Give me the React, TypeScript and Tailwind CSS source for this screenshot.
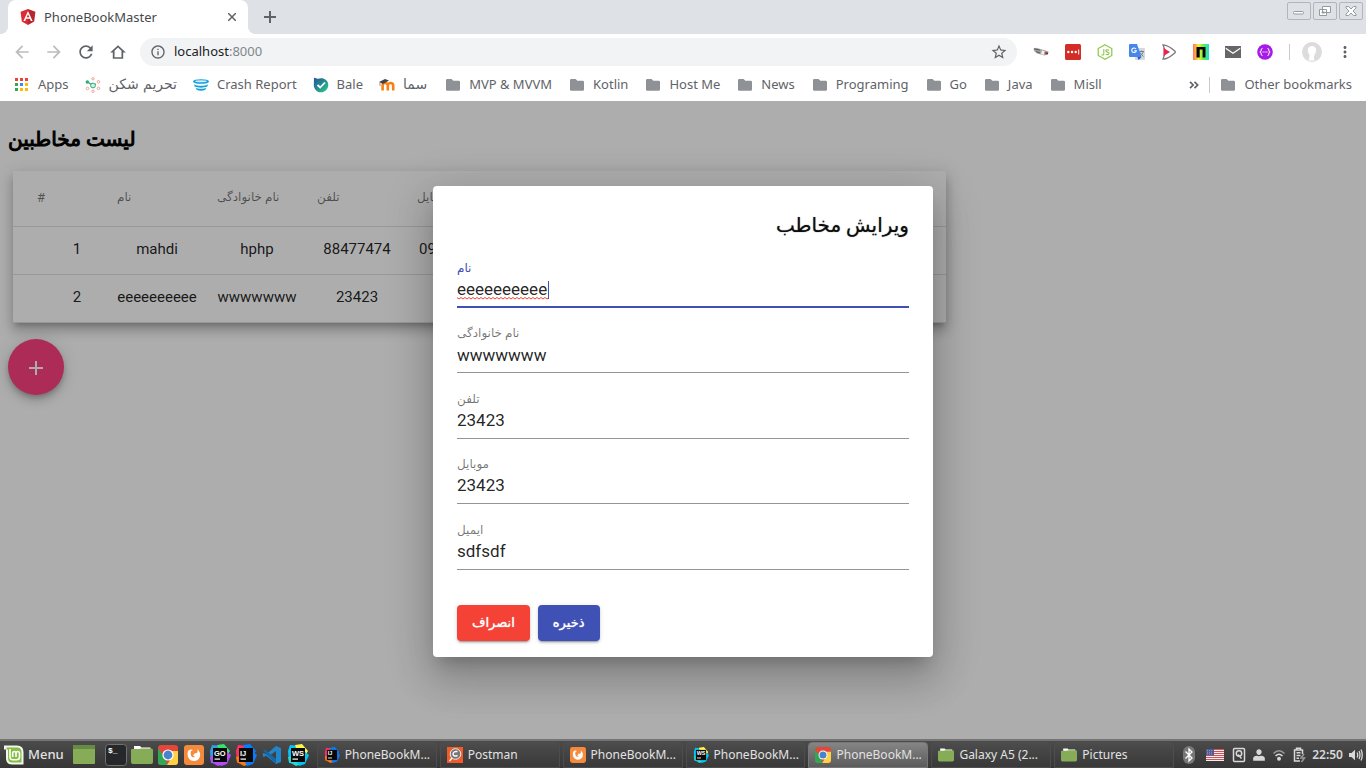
import React from 'react';

type IconProps = { className?: string };

/* ---------- Browser icons ---------- */

const material = {
  back: 'M20 11H7.83l5.59-5.59L12 4l-8 8 8 8 1.41-1.41L7.83 13H20v-2z',
  forward: 'M12 4l-1.41 1.41L16.17 11H4v2h12.17l-5.58 5.59L12 20l8-8z',
  reload:
    'M17.65 6.35C16.2 4.9 14.21 4 12 4c-4.42 0-7.99 3.58-7.99 8s3.57 8 7.99 8c3.73 0 6.84-2.55 7.73-6h-2.08c-.82 2.33-3.04 4-5.65 4-3.31 0-6-2.69-6-6s2.69-6 6-6c1.66 0 3.14.69 4.22 1.78L13 11h7V4l-2.35 2.35z',
  home: 'M12 1.800 L.2 12.800 H4.200 V22.200 H19.800 V12.800 H23.800 Z M12 5.200 L17.200 10.300 V19.800 H6.800 V10.300 Z',
  info: 'M11 7h2v2h-2zm0 4h2v6h-2zm1-9C6.48 2 2 6.48 2 12s4.48 10 10 10 10-4.48 10-10S17.52 2 12 2zm0 18c-4.41 0-8-3.59-8-8s3.59-8 8-8 8 3.59 8 8-3.59 8-8 8z',
  star: 'M22 9.24l-7.19-.62L12 2 9.19 8.63 2 9.24l5.46 4.73L5.82 21 12 17.27 18.18 21l-1.63-7.03L22 9.24zM12 15.4l-3.76 2.27 1-4.28-3.32-2.88 4.38-.38L12 6.1l1.71 4.04 4.38.38-3.32 2.88 1 4.28L12 15.4z',
  more: 'M12 8c1.1 0 2-.9 2-2s-.9-2-2-2-2 .9-2 2 .9 2 2 2zm0 2c-1.1 0-2 .9-2 2s.9 2 2 2 2-.9 2-2-.9-2-2-2zm0 6c-1.1 0-2 .9-2 2s.9 2 2 2 2-.9 2-2-.9-2-2-2z',
  person: 'M12 12c2.6 0 4.6-2.3 4.6-5S14.600 2 12 2 7.400 4.300 7.400 7s2 5 4.600 5zm-10 10h20v-4.500c0-2.500-3-3.800-6-4.300l-4 1-4-1c-3 .5-6 1.800-6 4.300z',
};

function Glyph({ d, className }: { d: string; className: string }) {
  return (
    <svg viewBox="0 0 24 24" fill="currentColor" fillRule="evenodd" className={className}>
      <path d={d} />
    </svg>
  );
}

function AngularLogo() {
  return (
    <svg viewBox="0 0 16 16" className="size-4">
      <path d="M8 0 L.6 2.700 1.800 12.500 8 16Z" fill="#dd2a33" />
      <path d="M8 0 L15.400 2.700 14.200 12.500 8 16Z" fill="#b8262f" />
      <path d="M8 2 L3.400 12.100 H5.200 L6.100 9.800 H9.900 L10.800 12.100 H12.600Z M8 5.300 L9.300 8.300 H6.700Z" fill="#fff" fillRule="evenodd" />
    </svg>
  );
}

function AppsGrid() {
  const colors = ['#ea4335', '#ea4335', '#ea4335', '#34a853', '#4285f4', '#fbbc05', '#34a853', '#fbbc05', '#fbbc05'];
  return (
    <svg viewBox="0 0 16 16" className="size-4">
      {colors.map((c, i) => (
        <rect key={i} x={1 + (i % 3) * 5} y={1 + Math.floor(i / 3) * 5} width="3" height="3" fill={c} />
      ))}
    </svg>
  );
}

function NetworkIcon() {
  return (
    <svg viewBox="0 0 16 16" className="size-4" fill="none">
      <path d="M2.500 5 L8 8.500 L11 7" stroke="#2bab7b" strokeWidth="1.300" />
      <circle cx="8" cy="8.500" r="2.400" stroke="#2bab7b" fill="#d8f1e7" />
      <circle cx="2.300" cy="5" r="1.700" fill="#2bab7b" />
      <g stroke="#f2a48e">
        <circle cx="8" cy="1.800" r="1.200" />
        <circle cx="13.500" cy="4.800" r="1.300" />
        <circle cx="13.500" cy="11.300" r="1.300" />
        <circle cx="8" cy="14.300" r="1.200" />
        <circle cx="2.500" cy="11.500" r="1.300" />
      </g>
    </svg>
  );
}

function CrashIcon() {
  return (
    <svg viewBox="0 0 16 16" className="size-4">
      <ellipse cx="8" cy="4.500" rx="8" ry="2.300" fill="#159fdc" />
      <ellipse cx="8" cy="4.300" rx="5.800" ry="1" fill="#d2effb" />
      <path d="M1 7.300 C4 9.300 12 9.300 15 7.300 L14.300 9.500 C11 11 5 11 1.700 9.500Z M2.500 10.700 C5 12 11 12 13.500 10.700 L12.300 12.700 C10 14 6 14 3.700 12.700Z" fill="#159fdc" />
    </svg>
  );
}

function BaleIcon() {
  return (
    <svg viewBox="0 0 16 16" className="size-4">
      <defs>
        <linearGradient id="bale" x1="0" y1="0" x2="1" y2="1">
          <stop offset="0" stopColor="#2d4fa0" />
          <stop offset=".5" stopColor="#238f8d" />
          <stop offset="1" stopColor="#30cf91" />
        </linearGradient>
      </defs>
      <path d="M1 .8 C3 1 4 2 5 1.800 C9 0 15.300 2 15.300 8 C15.300 12 12 15.300 8 15.300 C3.500 15.300 1 11.800 .8 8Z" fill="url(#bale)" />
      <path d="M4.500 8 L7.200 10.500 L12 5.500" fill="none" stroke="#fff" strokeWidth="1.800" />
    </svg>
  );
}

function MoodleIcon() {
  return (
    <svg viewBox="0 0 16 16" className="size-4">
      <path d="M3.600 13.500 V8.500 C3.600 5.200 8.800 5.200 8.800 8.500 V13.500 M8.800 8.500 C8.800 5.200 14.200 5.200 14.200 8.500 V13.500" fill="none" stroke="#f98012" strokeWidth="2.600" />
      <path d="M0 5 L6 2 L10 3.500 L4 7Z" fill="#444" />
      <path d="M1 5.500 V9" stroke="#777" strokeWidth=".8" />
    </svg>
  );
}

function BookmarkFolder() {
  return (
    <svg viewBox="0 0 16 16" className="size-4">
      <path d="M2.300 2 H6.600 L8.300 3.700 H13.700 Q15 3.700 15 5 V12.500 Q15 13.800 13.700 13.800 H2.300 Q1 13.800 1 12.500 V3.300 Q1 2 2.300 2Z" fill="#8e9196" />
    </svg>
  );
}

/* ---------- Extension icons ---------- */

const extensions: { name: string; art: React.ReactNode }[] = [
  {
    name: 'Camera',
    art: (
      <>
        <path d="M.5 4.500 L3 3.800 L11 6 L15.500 7.500 L15 10.500 L11.500 11.500 L4 9.500 L1 7Z" fill="#a3a7a4" />
        <path d="M1 4.800 L7 6.200 M3 7.500 L7 9" stroke="#444" strokeWidth=".8" />
        <path d="M9 6.500 L12.500 7.300 L11.500 11 L8 10Z" fill="#f0f0f0" />
        <rect x="11.500" y="7.500" width="1.300" height="3" fill="#c33" />
        <circle cx="14" cy="9.300" r="1.100" fill="#444" />
      </>
    ),
  },
  {
    name: 'Password manager',
    art: (
      <>
        <rect width="16" height="16" rx="1.500" fill="#d32d27" />
        <circle cx="3.300" cy="8" r="1.200" fill="#fff" />
        <circle cx="7" cy="8" r="1.200" fill="#fff" />
        <circle cx="10.700" cy="8" r="1.200" fill="#fff" />
        <rect x="13.200" y="5.500" width="1" height="5" fill="#fff" />
      </>
    ),
  },
  {
    name: 'Node',
    art: (
      <>
        <path d="M8 .8 L14.800 4.500 V11.500 L8 15.300 L1.200 11.500 V4.500Z" fill="#fff" stroke="#8cc84b" strokeWidth="1.200" />
        <path d="M6.800 5 V10 Q6.800 11.600 4.300 10.700 M12 6.200 Q8.700 5.200 8.900 6.900 Q9 7.900 10.700 8.100 Q12.200 8.400 12 9.700 Q11.500 11.300 8.700 10.200" fill="none" stroke="#8cc84b" strokeWidth="1.100" />
      </>
    ),
  },
  {
    name: 'Translate',
    art: (
      <>
        <rect x="6" y="4" width="10" height="12" rx="1" fill="#d5d8dc" />
        <path d="M10 7.500 H15 M12.500 6.500 V7.500 M14.500 7.500 Q13 11 10.500 12.500 M11 8.500 Q12.500 11 14.500 12.500" stroke="#71828c" fill="none" />
        <path d="M1 0 H8 L12.500 13 H1 Q0 13 0 12 V1 Q0 0 1 0Z" fill="#4787ed" />
        <path d="M8.500 13 H12.500 L9.500 16Z" fill="#2a56c6" />
        <path d="M7 5 A2.300 2.300 0 1 0 7.300 6.800 H5.200" fill="none" stroke="#fff" strokeWidth="1.100" />
      </>
    ),
  },
  {
    name: 'Player',
    art: (
      <>
        <path d="M2 .8 Q7 .8 14 7.200 Q14.800 8 14 8.800 Q7 15.200 2 15.200 Q4 11 3.500 8 Q4 5 2 .8Z" fill="#fff" stroke="#777" strokeWidth="1.300" />
        <path d="M2.500 4 L9 8 L2.500 12Z" fill="#ee204d" />
      </>
    ),
  },
  {
    name: 'Spectrum',
    art: (
      <>
        <defs>
          <linearGradient id="rainbow">
            <stop offset="0" stopColor="#ff775c" />
            <stop offset=".35" stopColor="#f8ee32" />
            <stop offset=".65" stopColor="#62ee48" />
            <stop offset="1" stopColor="#22ded9" />
          </linearGradient>
        </defs>
        <rect width="16" height="16" fill="url(#rainbow)" />
        <path d="M3.500 3 H12.500 V13.500 H9.600 V5.500 H6.700 V13.500 H3.500Z" fill="#050505" />
      </>
    ),
  },
  {
    name: 'Mail',
    art: <path d="M0 2 H16 V14 H0Z M.7 3.500 V4.900 L8 10 L15.300 4.900 V3.500 L8 8.500Z" fill="#666" fillRule="evenodd" />,
  },
  {
    name: 'JSON',
    art: (
      <>
        <circle cx="8" cy="8" r="7.800" fill="#a61be8" />
        <path d="M5.500 4.500 Q4 4.500 4.200 6 Q4.300 8 2.800 8 Q4.300 8 4.200 10 Q4 11.500 5.500 11.500 M10.500 4.500 Q12 4.500 11.800 6 Q11.700 8 13.200 8 Q11.700 8 11.800 10 Q12 11.500 10.500 11.500" stroke="#fff" fill="none" />
        <path d="M5.500 8 H10.500" stroke="#fff" strokeWidth="1.200" strokeDasharray="1.200 .7" />
      </>
    ),
  },
];

const bookmarks: { label: string; icon?: React.ReactNode; fa?: boolean }[] = [
  { label: 'Apps', icon: <AppsGrid /> },
  { label: 'تحریم شکن', icon: <NetworkIcon />, fa: true },
  { label: 'Crash Report', icon: <CrashIcon /> },
  { label: 'Bale', icon: <BaleIcon /> },
  { label: 'سما', icon: <MoodleIcon />, fa: true },
  { label: 'MVP & MVVM' },
  { label: 'Kotlin' },
  { label: 'Host Me' },
  { label: 'News' },
  { label: 'Programing' },
  { label: 'Go' },
  { label: 'Java' },
  { label: 'Misll' },
];

function Bookmark({ label, icon, fa }: { label: string; icon?: React.ReactNode; fa?: boolean }) {
  return (
    <a href="#" className="flex shrink-0 items-center gap-2">
      {icon ?? <BookmarkFolder />}
      <span className={fa ? "font-['DejaVu_Sans',sans-serif] text-[14px]" : ''}>{label}</span>
    </a>
  );
}

function WindowButton({ label, children }: { label: string; children: React.ReactNode }) {
  return (
    <button aria-label={label} className="flex h-[18px] w-6 items-center justify-center rounded-[2px] border border-[#b2b5b9]">
      <svg viewBox="0 0 14 12" className="h-3 w-3.5" fill="#fff" stroke="#96999d">
        {children}
      </svg>
    </button>
  );
}

function Browser() {
  return (
    <header className="shrink-0 font-['Noto_Sans',sans-serif] text-[13px] text-[#5f6368]">
      <div className="flex h-[34px] items-start bg-[#dee1e6] pr-[3px] pl-2">
        <div className="relative flex h-[34px] w-60 items-center rounded-t-lg bg-white px-3">
          <span className="absolute bottom-0 -left-2 size-2 bg-[radial-gradient(circle_at_0_0,transparent_8px,white_8px)]" />
          <span className="absolute -right-2 bottom-0 size-2 bg-[radial-gradient(circle_at_100%_0,transparent_8px,white_8px)]" />
          <AngularLogo />
          <span className="ml-2 flex-1 pt-0.5 text-[#45494d]">PhoneBookMaster</span>
          <button aria-label="Close tab" className="text-[#5f6368]">
            <svg viewBox="0 0 8 8" className="size-2" stroke="currentColor" strokeWidth="1.500">
              <path d="M0 0 L8 8 M8 0 L0 8" />
            </svg>
          </button>
        </div>
        <button aria-label="New tab" className="flex h-[34px] w-11 items-center justify-center text-[#5f6368]">
          <svg viewBox="0 0 12 12" className="size-3" stroke="currentColor" strokeWidth="2">
            <path d="M6 0 V12 M0 6 H12" />
          </svg>
        </button>
        <div className="ml-auto flex gap-0.5 pt-0.5">
          <WindowButton label="Minimize">
            <rect x="1.500" y="6.500" width="10" height="2.500" rx="1" />
          </WindowButton>
          <WindowButton label="Restore">
            <path d="M4.500 1.500 H12.500 V7.500 H4.500Z M1.500 4.500 H8.500 V10.500 H1.500Z M4 7 H6.500 V8 H4Z" />
          </WindowButton>
          <WindowButton label="Close">
            <path d="M2 1.500 H4.500 L7 4 L9.500 1.500 H12 V3 L9 6 L12 9 V10.500 H9.500 L7 8 L4.500 10.500 H2 V9 L5 6 L2 3Z" />
          </WindowButton>
        </div>
      </div>

      <div className="flex h-9 items-center bg-white pr-3">
        <nav className="flex gap-3 pr-3 pl-3">
          <button aria-label="Back" className="text-[#babcbe]"><Glyph d={material.back} className="size-5" /></button>
          <button aria-label="Forward" className="text-[#babcbe]"><Glyph d={material.forward} className="size-5" /></button>
          <button aria-label="Reload"><Glyph d={material.reload} className="size-5" /></button>
          <button aria-label="Home"><Glyph d={material.home} className="size-5 p-0.5" /></button>
        </nav>
        <div className="flex h-7 flex-1 items-center gap-2 rounded-full bg-[#f1f3f4] pr-[9px] pl-2.5">
          <Glyph d={material.info} className="size-4" />
          <span className="flex-1 text-[#202124]">
            localhost<span className="text-[#80868b]">:8000</span>
          </span>
          <button aria-label="Bookmark this page"><Glyph d={material.star} className="size-[18px]" /></button>
        </div>
        <div className="flex items-center gap-4 pl-4">
          {extensions.map((e) => (
            <button key={e.name} aria-label={e.name}>
              <svg viewBox="0 0 16 16" className="size-4">{e.art}</svg>
            </button>
          ))}
        </div>
        <div className="mx-3 ml-4 h-4 w-px bg-[#c8cacd]" />
        <button aria-label="Profile">
          <svg viewBox="0 0 20 20" className="size-5">
            <circle cx="10" cy="10" r="10" fill="#dcdcdc" />
            <path d="M10 4 C5.500 4 4.800 9 7 12 C8 13.500 7.500 15 6.500 18.500 H12.500 C11.500 15 12 13.500 13.500 11 C15 8 14 4 10 4Z" fill="#fff" />
          </svg>
        </button>
        <button aria-label="Menu" className="ml-3.5"><Glyph d={material.more} className="size-[18px]" /></button>
      </div>

      <div className="flex h-[31px] items-center gap-4 overflow-hidden bg-white pr-3.5 pb-0.5 pl-3.5">
        <div className="flex gap-4">
          {bookmarks.slice(0, 5).map((b) => (
            <Bookmark key={b.label} {...b} />
          ))}
        </div>
        <div className="ml-0.5 flex gap-[17px]">
          {bookmarks.slice(5).map((b) => (
            <Bookmark key={b.label} {...b} />
          ))}
        </div>
        <div className="ml-auto flex items-center">
          <button aria-label="More bookmarks">
            <svg viewBox="0 0 10 8" className="h-2 w-2.5" fill="none" stroke="#5f6368" strokeWidth="1.700">
              <path d="M1 .8 L4.200 4 L1 7.200 M5.500 .8 L8.700 4 L5.500 7.200" />
            </svg>
          </button>
          <div className="mr-2.5 ml-2.5 h-4 w-px bg-[#c8cacd]" />
          <Bookmark label="Other bookmarks" />
        </div>
      </div>
    </header>
  );
}

/* ---------- Contacts page ---------- */

const contacts = [
  { id: 1, name: 'mahdi', family: 'hphp', phone: '88477474', mobile: '091111111' },
  { id: 2, name: 'eeeeeeeeee', family: 'wwwwwww', phone: '23423', mobile: '23423' },
];

const columns = ['#', 'نام', 'نام خانوادگی', 'تلفن', 'موبایل'];

function ContactsPage() {
  return (
    <div className="h-full px-2 pt-[22px]">
      <h2 className="text-[20px] leading-8 [-webkit-text-stroke:1px_black]">لیست مخاطبین</h2>
      <div className="mt-4 ml-[5px] w-fit bg-white shadow-[0_5px_5px_-3px_rgba(0,0,0,.2),0_8px_10px_1px_rgba(0,0,0,.14),0_3px_14px_2px_rgba(0,0,0,.12)]">
        <table className="w-[933px] table-fixed border-collapse text-[15px] text-black/87">
          <colgroup>
            <col className="w-[104px]" />
            <col className="w-[100px]" />
            <col className="w-[100px]" />
            <col className="w-[100px]" />
            <col className="w-[100px]" />
            <col />
          </colgroup>
          <thead>
            <tr className="h-[55px] border-b border-black/12 text-[12px] text-black/54">
              {columns.map((c) => (
                <th key={c} className="p-0 pb-0.5 text-left font-normal first:pl-6 first:text-[13px]">{c}</th>
              ))}
              <th />
            </tr>
          </thead>
          <tbody>
            {contacts.map((c) => (
              <tr key={c.id} className="h-12 border-b border-black/12 [&>td]:p-0 [&>td]:pr-5 [&>td]:pb-0.5 [&>td]:text-center">
                <td className="pr-0! pl-6!">{c.id}</td>
                <td>{c.name}</td>
                <td>{c.family}</td>
                <td>{c.phone}</td>
                <td>{c.mobile}</td>
                <td />
              </tr>
            ))}
          </tbody>
        </table>
      </div>
      <button
        aria-label="Add contact"
        className="mt-4 flex size-14 items-center justify-center rounded-full bg-[#ff4081] text-white shadow-[0_3px_5px_-1px_rgba(0,0,0,.2),0_6px_10px_0_rgba(0,0,0,.14),0_1px_18px_0_rgba(0,0,0,.12)]"
      >
        <svg viewBox="0 0 14 14" className="mt-0.5 size-3.5" stroke="currentColor" strokeWidth="2">
          <path d="M7 0 V14 M0 7 H14" />
        </svg>
      </button>
    </div>
  );
}

const fields = [
  { id: 'name', label: 'نام', value: 'eeeeeeeeee', focused: true },
  { id: 'family', label: 'نام خانوادگی', value: 'wwwwwww' },
  { id: 'phone', label: 'تلفن', value: '23423' },
  { id: 'mobile', label: 'موبایل', value: '23423' },
  { id: 'email', label: 'ایمیل', value: 'sdfsdf' },
];

function Field({ id, label, value, focused }: { id: string; label: string; value: string; focused?: boolean }) {
  return (
    <div className="relative flex flex-col justify-end border-b border-black/42 pb-[5px]">
      <label htmlFor={id} className={focused ? 'text-[12px] leading-5 text-[#3f51b5]' : 'text-[12px] leading-5 text-black/54'}>
        {label}
      </label>
      <input id={id} defaultValue={value} spellCheck={false} className="h-6 w-full bg-transparent text-[17px] text-black/87 outline-none" />
      {focused && (
        <>
          <svg viewBox="0 0 93 22" className="absolute bottom-1 left-0 h-[22px] w-[93px]" fill="none">
            <path d={'M0 16.500' + ' l2 1.500 l2 -1.500'.repeat(23)} stroke="#f44336" />
            <path d="M91.500 0 V18" stroke="#3f51b5" />
          </svg>
          <span className="absolute inset-x-0 -bottom-px h-0.5 bg-[#3f51b5]" />
        </>
      )}
    </div>
  );
}

function EditDialog() {
  const button =
    'h-9 rounded px-[15px] text-[13px] text-white [text-shadow:0_0_1px_white] shadow-[0_3px_1px_-2px_rgba(0,0,0,.2),0_2px_2px_0_rgba(0,0,0,.14),0_1px_5px_0_rgba(0,0,0,.12)]';
  return (
    <form
      role="dialog"
      aria-labelledby="dialog-title"
      onSubmit={(e) => e.preventDefault()}
      className="w-[500px] max-w-full rounded bg-white px-6 pt-6 pb-4 shadow-[0_11px_15px_-7px_rgba(0,0,0,.2),0_24px_38px_3px_rgba(0,0,0,.14),0_9px_46px_8px_rgba(0,0,0,.12)]"
    >
      <h2 id="dialog-title" dir="rtl" className="h-[33px] text-[20px] leading-[30px] text-black/87 [text-shadow:0_0_1px_rgba(0,0,0,.7)]">ویرایش مخاطب</h2>
      <div className="grid h-[327px] grid-rows-5">
        {fields.map((f) => (
          <Field key={f.id} {...f} />
        ))}
      </div>
      <div className="mt-[35px] flex gap-2">
        <button type="button" className={button + ' bg-[#f44336]'}>انصراف</button>
        <button type="submit" className={button + ' bg-[#3f51b5]'}>ذخیره</button>
      </div>
    </form>
  );
}

/* ---------- Desktop panel ---------- */

function MintIcon() {
  return (
    <svg viewBox="0 0 20 20" className="size-5">
      <path d="M0 .5 H13 Q19.500 .5 19.500 7 V19.500 H8 Q2 19.500 2 13 V4.500 H0Z" fill="#f2f6ec" />
      <path d="M2.500 2.500 H13 Q17.500 2.500 17.500 7 V17.500 H8 Q4 17.500 4 13 V4.500 H2.500Z" fill="#86be43" />
      <path d="M6 4 V12 Q6 14.800 9 14.800 H12.500 Q15.500 14.800 15.500 12 V8.500 Q15.500 6.500 13.700 6.500 Q12 6.500 12 8.500 V12 M12 8.500 Q12 6.500 10.300 6.500 Q8.700 6.500 8.700 8.500 V12" fill="none" stroke="#fff" strokeWidth="1.600" />
    </svg>
  );
}

function DesktopIcon() {
  return (
    <svg viewBox="0 0 22 20" className="h-5 w-[22px]">
      <rect y="0" width="22" height="19" rx="1" fill="#87ac58" />
      <path d="M0 0 H22 V4 H0Z" fill="#668b42" />
    </svg>
  );
}

function TerminalIcon() {
  return (
    <svg viewBox="0 0 22 22" className="size-[22px]">
      <rect x=".5" y=".5" width="21" height="21" rx="3" fill="#25272a" stroke="#70716f" />
      <text x="3" y="9" fontSize="8" fontWeight="700" fontFamily="Liberation Mono, monospace" fill="#fff">$_</text>
    </svg>
  );
}

function FolderIcon({ className = 'size-[22px]' }: IconProps) {
  return (
    <svg viewBox="0 0 22 22" className={className}>
      <path d="M3 2 H9 L10.500 3.500 H19.500 V8 H3Z" fill="#fff" />
      <path d="M1 5 H8 L10 4.500 H20 Q22 4.500 22 6 V18 Q22 20 20 20 H2 Q0 20 0 18 V6 Q0 5 1 5Z" fill="#87ac58" />
    </svg>
  );
}

function ChromeIcon({ className = 'size-5' }: IconProps) {
  return (
    <svg viewBox="0 0 20 20" className={className}>
      <rect width="20" height="20" rx="3" fill="#e4473a" />
      <path d="M0 3 L6 11.500 L10 20 H3 Q0 20 0 17Z" fill="#31a752" />
      <path d="M10 6 H20 V17 Q20 20 17 20 H9 L14 12Z" fill="#fdd147" />
      <circle cx="10" cy="10" r="5.600" fill="#fff" />
      <circle cx="10" cy="10" r="4.400" fill="#4a83cc" />
    </svg>
  );
}

function SwirlIcon({ className = 'size-5' }: IconProps) {
  return (
    <svg viewBox="0 0 20 20" className={className}>
      <rect width="20" height="20" rx="3" fill="#f58a3c" />
      <path d="M4 6 C2.500 11 5 16 10 16 C15 16 17.500 11 15.500 7 L13.500 4 C14 8 13 9 11 8 L9 10.500 L11 12 C7 13.500 6 9 7 6 L9 5 Q6 3.500 4 6Z" fill="#fff" />
    </svg>
  );
}

function IdeIcon({ label, kind, className = 'size-[22px]' }: IconProps & { label: string; kind: 'go' | 'ij' | 'ws' }) {
  const palette = {
    go: ['#2e9fe8', '#b74af7', '#36e36c'],
    ij: ['#fe315d', '#f97a12', '#087cfa'],
    ws: ['#07c3f2', '#27d7d1', '#fcf84a'],
  }[kind];
  return (
    <svg viewBox="0 0 22 22" className={className}>
      <path d="M1 7 L3 1 L13 2 L11 20 L2 19Z" fill={palette[0]} />
      <path d="M8 1 L15 0 L21 7 L18 12 L11 9Z" fill={palette[2]} />
      <path d="M1 13 L10 10 L15 20 L9 22 L2 18Z" fill={palette[1]} />
      <path d="M17 7 L22 11 L18 20 L12 22 L10 18Z" fill={kind === 'go' ? palette[1] : kind === 'ws' ? palette[0] : palette[2]} />
      <rect x="4" y="4" width="14" height="14" fill="#080808" />
      <text x="5" y="11.500" fontSize="7.500" fontWeight="700" fontFamily="Liberation Sans, sans-serif" fill="#fff">{label}</text>
      <rect x="5.500" y="14.500" width="5.500" height="1.200" fill="#fff" />
    </svg>
  );
}

function CodeIcon() {
  return (
    <svg viewBox="0 0 20 20" className="size-5">
      <path d="M14 1 L19 3 V17 L14 19 L4 10.500 L2 12 L.8 11.200 V8.500 L2 8 L4 9.500Z M14 6 L8.500 10 L14 14Z" fill="#2285c9" fillRule="evenodd" />
      <path d="M1 5.500 L3 4.500 L14 14 V19Z" fill="#1466a5" />
    </svg>
  );
}

function PostmanIcon() {
  return (
    <svg viewBox="0 0 16 16" className="size-4">
      <rect width="16" height="16" fill="#f15a29" />
      <circle cx="8.500" cy="7" r="5.300" fill="#777" stroke="#eee" />
      <path d="M10.500 4.500 Q6 4 6 7.500 Q7 10 10.500 8.500 M2.500 14 L5 11" fill="none" stroke="#fff" strokeWidth="1.400" />
    </svg>
  );
}

const tasks: { title: string; icon: React.ReactNode; active?: boolean }[] = [
  { title: 'PhoneBookM...', icon: <IdeIcon label="IJ" kind="ij" className="size-4" /> },
  { title: 'Postman', icon: <PostmanIcon /> },
  { title: 'PhoneBookM...', icon: <SwirlIcon className="size-4" /> },
  { title: 'PhoneBookM...', icon: <IdeIcon label="WS" kind="ws" className="size-4" /> },
  { title: 'PhoneBookM...', icon: <ChromeIcon className="size-4" />, active: true },
  { title: 'Galaxy A5 (2...', icon: <FolderIcon className="size-4" /> },
  { title: 'Pictures', icon: <FolderIcon className="size-4" /> },
];

function Tray() {
  return (
    <div className="flex shrink-0 items-center gap-1.5 pr-[3px] text-[#d8d8d8]">
      <svg viewBox="0 0 14 18" className="mr-1 h-[18px] w-3.5">
        <rect x="1" width="12" height="18" rx="6" fill="#777" />
        <path d="M3.500 5.500 L10 12 L7 15 V3 L10 6 L3.500 12.500" fill="none" stroke="#fff" strokeWidth="1.300" />
      </svg>
      <svg viewBox="0 0 18 12" className="mr-0.5 h-3 w-[18px]">
        <rect width="18" height="12" fill="#f4eeee" />
        <path d="M0 .5 H18 M0 2.500 H18 M0 4.500 H18 M0 6.500 H18 M0 8.500 H18 M0 10.500 H18" stroke="#d15358" />
        <rect width="8" height="6.500" fill="#4d5d94" />
        <path d="M1 1.500 H7 M1 3.300 H7 M1 5 H7" stroke="#a5aed0" strokeDasharray="1 1" strokeWidth=".7" />
      </svg>
      <svg viewBox="0 0 14 16" className="h-4 w-3.5" fill="none" stroke="currentColor" strokeWidth="1.500">
        <rect x="1.500" y="1.500" width="11" height="13" rx="1" />
        <circle cx="7" cy="6.500" r="2.700" />
        <path d="M6 7.500 L9.500 11.500" />
      </svg>
      <Glyph d={material.person} className="size-3.5" />
      <svg viewBox="0 0 14 14" className="size-3.5" fill="none" stroke="currentColor" strokeWidth="1.500">
        <path d="M1.500 5.500 Q7 0 12.500 5.500" stroke="#999" />
        <path d="M3.500 8 Q7 4.500 10.500 8" />
        <circle cx="7" cy="10.800" r="1.200" fill="currentColor" />
      </svg>
      <svg viewBox="0 0 14 16" className="h-4 w-3.5" fill="none" stroke="currentColor" strokeWidth="1.500">
        <path d="M8 14 H2.500 V3 H10.500 V7 M4.500 3 V1.300 H8.500 V3 M4.500 5.800 H8.500 M4.500 8.500 H8.500 M4.500 11.200 H7" />
        <path d="M12 7 L9 11 H12.500 L9.500 15" stroke="#999" />
      </svg>
      <span className="text-[12px] font-semibold">22:50</span>
      <svg viewBox="0 0 14 14" className="size-3.5" fill="none" stroke="currentColor" strokeWidth="1.300">
        <path d="M0 5 H2.500 L6 1.800 V12.200 L2.500 9 H0Z" fill="currentColor" stroke="none" />
        <path d="M8 4.500 Q9.500 7 8 9.500 M10 3 Q12 7 10 11 M12 1.500 Q14.500 7 12 12.500" />
      </svg>
    </div>
  );
}

function Taskbar() {
  return (
    <footer className="flex h-[29px] shrink-0 items-center border-t-2 border-[#747474] bg-linear-to-b from-[#4b4b4b] to-[#363636] pl-1 font-['Noto_Sans',sans-serif] text-[12px] text-[#e2e2e2]">
      <button className="flex items-center gap-1 text-[13px] font-medium">
        <MintIcon />
        Menu
      </button>
      <div className="flex w-[245px] shrink-0 items-center gap-1 pl-[9px]">
        <button aria-label="Show desktop" className="mr-1.5"><DesktopIcon /></button>
        <button aria-label="Terminal"><TerminalIcon /></button>
        <button aria-label="Files"><FolderIcon /></button>
        <button aria-label="Chrome" className="mx-px"><ChromeIcon /></button>
        <button aria-label="Postwoman" className="mx-px"><SwirlIcon /></button>
        <button aria-label="GoLand"><IdeIcon label="GO" kind="go" /></button>
        <button aria-label="IntelliJ"><IdeIcon label="IJ" kind="ij" /></button>
        <button aria-label="Code" className="mx-px"><CodeIcon /></button>
        <button aria-label="WebStorm"><IdeIcon label="WS" kind="ws" /></button>
      </div>
      <div className="ml-2 flex min-w-0 flex-1 gap-[3px] pr-2">
        {tasks.map((t, i) => (
          <button
            key={i}
            className={
              t.active
                ? 'flex h-[26px] min-w-0 flex-1 items-center gap-[5px] rounded-t border border-[#777] bg-linear-to-b from-[#858585] to-[#5b5b5b] pl-1.5 whitespace-nowrap'
                : 'flex h-[26px] min-w-0 flex-1 items-center gap-[5px] rounded-t border border-[#4d4d4d] bg-linear-to-b from-[#4c4c4c] to-[#393939] pl-1.5 whitespace-nowrap'
            }
          >
            <span className="shrink-0">{t.icon}</span>
            {t.title}
          </button>
        ))}
      </div>
      <Tray />
    </footer>
  );
}

export default function App() {
  return (
    <div className="flex h-screen flex-col overflow-hidden [&_svg]:block [&_svg]:shrink-0">
      <Browser />
      <main className="relative min-h-0 flex-1 overflow-hidden bg-white font-[Roboto,'DejaVu_Sans',sans-serif]">
        <ContactsPage />
        <div className="absolute inset-0 flex items-center justify-center bg-black/32 pt-0.5">
          <EditDialog />
        </div>
      </main>
      <Taskbar />
    </div>
  );
}
